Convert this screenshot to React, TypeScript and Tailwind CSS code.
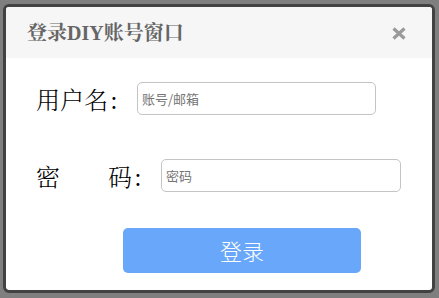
import React from "react";

export default function App() {
  const cjk = '"Noto Serif CJK SC", "Noto Sans CJK SC", serif';
  return (
    <div className="w-[439px] h-[298px] bg-[#7f7f7f] pt-[4px] pl-[3px] overflow-hidden">
      <div className="w-[432px] h-[289px] border-[3px] border-[#424242] rounded-[6px] bg-white overflow-hidden flex flex-col">
        <div className="h-[51px] bg-[#f6f6f6] flex items-center justify-between pl-[21px] pr-[26px]">
          <span
            className="text-[20px] font-bold text-[#666666] leading-none"
            style={{ fontFamily: '"Liberation Serif", "Noto Serif CJK SC", "Noto Sans CJK SC", serif' }}
          >
            登录DIY账号窗口
          </span>
          <svg width="14" height="13" viewBox="0 0 14 13" className="mt-[1px]">
            <path d="M1.5 1.5 L12.5 11.5 M12.5 1.5 L1.5 11.5" stroke="#9a9a9a" strokeWidth="3.2" strokeLinecap="butt" />
          </svg>
        </div>
        <div className="flex flex-col px-[30px]">
          <div className="mt-[24px] h-[33px] flex items-center">
            <span className="w-[101px] text-[24px] font-light text-black leading-none" style={{ fontFamily: cjk }}>
              用户名<span className="ml-[2px] font-normal">:</span>
            </span>
            <input
              className="w-[239px] h-[33px] border border-[#c4c4c4] rounded-[5px] pl-[4px] text-[13px] outline-none placeholder:text-[#757575]"
              style={{ fontFamily: '"Noto Sans CJK SC", sans-serif' }}
              placeholder="账号/邮箱"
            />
          </div>
          <div className="mt-[44px] h-[33px] flex items-center">
            <span className="w-[125px] flex text-[24px] font-light text-black leading-none" style={{ fontFamily: cjk }}>
              <span className="w-[72px]">密</span>
              <span>码<span className="ml-[2px] font-normal">:</span></span>
            </span>
            <input
              className="w-[240px] h-[33px] border border-[#c4c4c4] rounded-[5px] pl-[4px] text-[13px] outline-none placeholder:text-[#757575]"
              style={{ fontFamily: '"Noto Sans CJK SC", sans-serif' }}
              placeholder="密码"
            />
          </div>
          <button
            className="mt-[36px] ml-[87px] w-[238px] h-[45px] bg-[#68a7fa] rounded-[5px] text-white text-[22px] font-light flex items-center justify-center"
            style={{ fontFamily: '"Noto Sans CJK SC", sans-serif' }}
          >
            登录
          </button>
        </div>
      </div>
    </div>
  );
}
